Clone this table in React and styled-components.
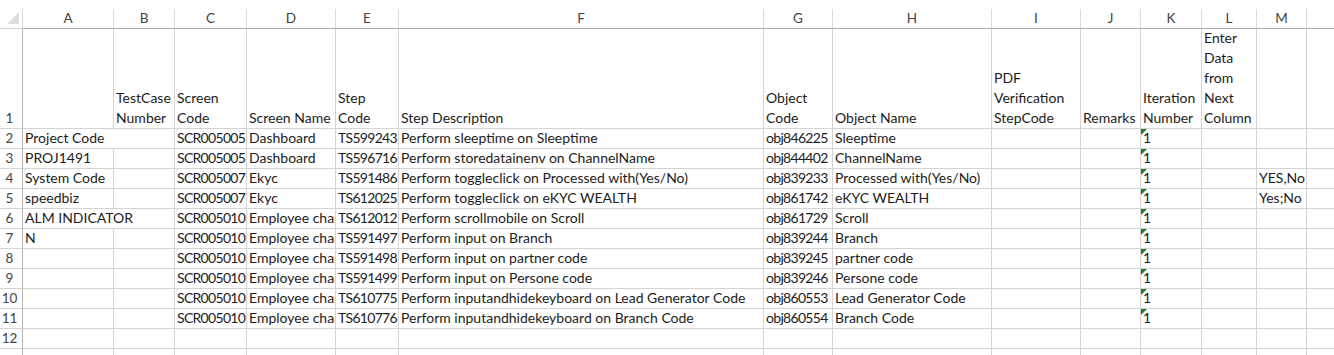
import styled, { createGlobalStyle } from 'styled-components';

const GlobalStyle = createGlobalStyle`
	body {
		margin: 0;
		background: #fff;
		font-family: Lato, "Open Sans", sans-serif;
		overflow: hidden;
	}
`;

// code columns hold digit-heavy ids, which run wider in Lato than in the sheet font
const COLUMNS = [
	{ key: 'A', width: 91 },
	{ key: 'B', width: 61 },
	{ key: 'C', width: 72, tight: true },
	{ key: 'D', width: 89 },
	{ key: 'E', width: 63, tight: true },
	{ key: 'F', width: 365 },
	{ key: 'G', width: 69, tight: true },
	{ key: 'H', width: 159 },
	{ key: 'I', width: 89 },
	{ key: 'J', width: 60 },
	{ key: 'K', width: 61 },
	{ key: 'L', width: 55 },
	{ key: 'M', width: 50 },
	{ key: 'N', width: 80, hidden: true },
];

const TITLES = [
	[],
	['TestCase', 'Number'],
	['Screen', 'Code'],
	['Screen Name'],
	['Step', 'Code'],
	['Step Description'],
	['Object', 'Code'],
	['Object Name'],
	['PDF', 'Verification', 'StepCode'],
	['Remarks'],
	['Iteration', 'Number'],
	['Enter', 'Data', 'from', 'Next', 'Column'],
	[],
	[],
];

const SCREEN = 'Employee channel';

const ROWS = [
	['Project Code', '', 'SCR005005', 'Dashboard', 'TS599243', 'Perform sleeptime on Sleeptime', 'obj846225', 'Sleeptime', '', '', '1', '', ''],
	['PROJ1491', '', 'SCR005005', 'Dashboard', 'TS596716', 'Perform storedatainenv on ChannelName', 'obj844402', 'ChannelName', '', '', '1', '', ''],
	['System Code', '', 'SCR005007', 'Ekyc', 'TS591486', 'Perform toggleclick on Processed with(Yes/No)', 'obj839233', 'Processed with(Yes/No)', '', '', '1', '', 'YES,No'],
	['speedbiz', '', 'SCR005007', 'Ekyc', 'TS612025', 'Perform toggleclick on eKYC WEALTH', 'obj861742', 'eKYC WEALTH', '', '', '1', '', 'Yes;No'],
	['ALM INDICATOR', '', 'SCR005010', SCREEN, 'TS612012', 'Perform scrollmobile on Scroll', 'obj861729', 'Scroll', '', '', '1', '', ''],
	['N', '', 'SCR005010', SCREEN, 'TS591497', 'Perform input on Branch', 'obj839244', 'Branch', '', '', '1', '', ''],
	['', '', 'SCR005010', SCREEN, 'TS591498', 'Perform input on partner code', 'obj839245', 'partner code', '', '', '1', '', ''],
	['', '', 'SCR005010', SCREEN, 'TS591499', 'Perform input on Persone code', 'obj839246', 'Persone code', '', '', '1', '', ''],
	['', '', 'SCR005010', SCREEN, 'TS610775', 'Perform inputandhidekeyboard on Lead Generator Code', 'obj860553', 'Lead Generator Code', '', '', '1', '', ''],
	['', '', 'SCR005010', SCREEN, 'TS610776', 'Perform inputandhidekeyboard on Branch Code', 'obj860554', 'Branch Code', '', '', '1', '', ''],
	['', '', '', '', '', '', '', '', '', '', '', '', ''],
];

const Sheet = styled.div`
	display: flex;
	flex-direction: column;
	width: 1334px;
	height: 355px;
	overflow: hidden;
	font-size: 14px;
	color: #1c1c1c;
`;

const HeaderRow = styled.div`
	display: flex;
	padding-top: 9px;
	flex-shrink: 0;
`;

const Corner = styled.div`
	position: relative;
	box-sizing: border-box;
	width: 23px;
	height: 20px;
	flex-shrink: 0;
	border-right: 1px solid #dcdcdc;
	border-bottom: 1px solid #d4d4d4;

	&::after {
		content: '';
		position: absolute;
		left: 7px;
		top: 3px;
		width: 0;
		height: 0;
		border-left: 12px solid transparent;
		border-bottom: 12px solid #dfdfdf;
	}
`;

const ColHeader = styled.div`
	box-sizing: border-box;
	width: ${({ $width }) => $width}px;
	height: 20px;
	flex-shrink: 0;
	display: flex;
	align-items: center;
	justify-content: center;
	font-size: 13.5px;
	line-height: 19px;
	color: #444;
	border-right: 1px solid #dadada;
	border-bottom: 1px solid #ababab;
`;

const Row = styled.div`
	display: flex;
	flex-shrink: 0;
	height: ${({ $height }) => $height}px;
`;

const RowNumber = styled.div`
	box-sizing: border-box;
	width: 23px;
	flex-shrink: 0;
	display: flex;
	align-items: flex-end;
	justify-content: center;
	padding-right: 3px;
	font-size: 13.5px;
	line-height: 20px;
	color: #444;
	border-right: 1px solid #b4b4b4;
	border-bottom: 1px solid #d4d4d4;
`;

const Cell = styled.div`
	position: relative;
	box-sizing: border-box;
	width: ${({ $width }) => $width}px;
	flex-shrink: 0;
	display: flex;
	flex-direction: column;
	justify-content: flex-end;
	padding: 0 2px;
	line-height: 20px;
	letter-spacing: ${({ $tight }) => ($tight ? '-0.7px' : 'normal')};
	white-space: nowrap;
	overflow: ${({ $spill }) => ($spill ? 'visible' : 'hidden')};
	border-right: 1px solid ${({ $spill }) => ($spill ? 'transparent' : '#d4d4d4')};
	border-bottom: 1px solid #d4d4d4;
	z-index: ${({ $spill }) => ($spill ? 1 : 0)};
`;

const NumberFlag = styled.span`
	position: absolute;
	left: 0;
	top: 0;
	width: 0;
	height: 0;
	border-top: 6px solid #1f7a35;
	border-right: 6px solid transparent;
`;

const Line = styled.span`
	display: block;
`;

const App = () => (
	<>
		<GlobalStyle />
		<Sheet>
			<HeaderRow>
				<Corner />
				{COLUMNS.map(({ key, width, hidden }) => (
					<ColHeader key={key} $width={width}>
						{hidden ? '' : key}
					</ColHeader>
				))}
			</HeaderRow>

			<Row $height={100}>
				<RowNumber>1</RowNumber>
				{COLUMNS.map(({ key, width }, i) => (
					<Cell key={key} $width={width}>
						{TITLES[i].map((line) => (
							<Line key={line}>{line}</Line>
						))}
					</Cell>
				))}
			</Row>

			{ROWS.map((values, r) => (
				<Row key={r} $height={20}>
					<RowNumber>{r + 2}</RowNumber>
					{COLUMNS.map(({ key, width, tight }, i) => {
						const value = values[i] || '';
						// text runs on into the next cell only when that cell is empty
						const spill = key === 'A' && value.length > 11 && !values[1];
						return (
							<Cell key={key} $width={width} $tight={tight} $spill={spill}>
								{key === 'K' && value && <NumberFlag />}
								<Line>{value}</Line>
							</Cell>
						);
					})}
				</Row>
			))}

			<Row $height={20}>
				<RowNumber />
				{COLUMNS.map(({ key, width }) => (
					<Cell key={key} $width={width} />
				))}
			</Row>
		</Sheet>
	</>
);

export default App;
